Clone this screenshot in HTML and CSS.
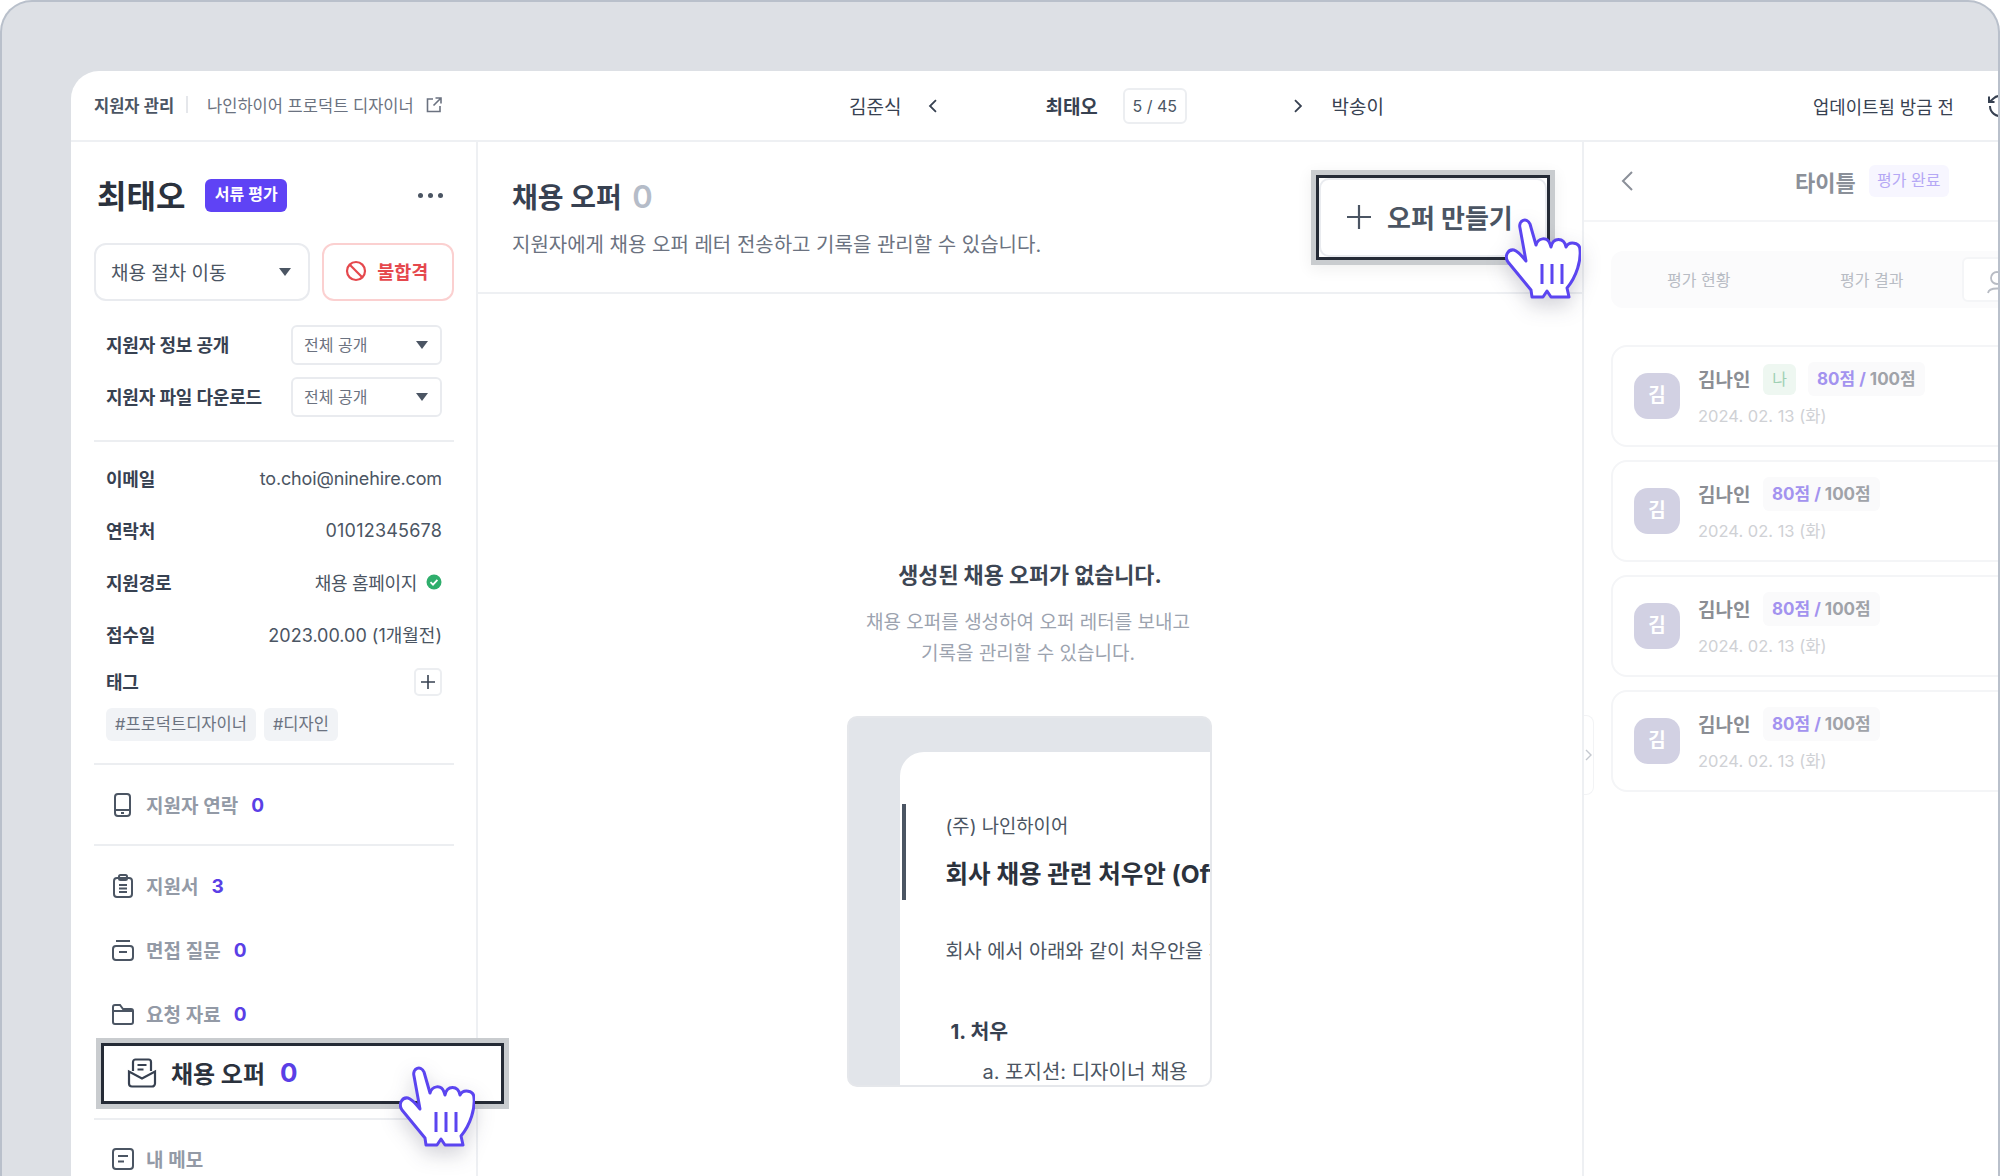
FILE: index.html
```html
<!DOCTYPE html>
<html lang="ko">
<head>
  <meta charset="UTF-8">
  <title>지원자 관리</title>
  <link rel="stylesheet" href="styles.css">
</head>
<body>

  <svg class="defs" width="0" height="0">
    <symbol id="hand" viewBox="0 0 76 81">
      <path d="M26 72 L3 44 C-1 38 3 31 9 32 C13 33 17 38 21 43 L15 10 C13 2 22 -1 25 6 L31 27 C33 20 42 18 45 26 L46 29 C48 19 59 19 61 29 C64 23 75 24 75 32 C76 42 72 58 62 70 L64 79 L46 79 L42 73 L38 79 L27 79 Z" fill="#fff" stroke="#5b45f0" stroke-width="3" stroke-linejoin="round"/>
      <path d="M37 46V66M47 46V66M57 46V66" fill="none" stroke="#5b45f0" stroke-width="3"/>
    </symbol>
  </svg>

  <div class="frame">
    <div class="window">

      <header class="topbar">
        <div class="crumbs">
          <strong>지원자 관리</strong>
          <span class="crumb-sep"></span>
          <span class="crumb-job">나인하이어 프로덕트 디자이너</span>
          <svg class="crumb-icon" width="18" height="18" viewBox="0 0 18 18" fill="none" stroke="#6b7280" stroke-width="1.6"><path d="M8 3H2.500V15.500H15V10M10.500 2H16V7.500M16 2L8.500 9.500"/></svg>
        </div>
        <div class="pager">
          <span>김준식</span>
          <svg class="pager-prev" width="10" height="16" viewBox="0 0 10 16" fill="none" stroke="#374151" stroke-width="1.8"><path d="M8 2L2 8L8 14"/></svg>
          <strong class="pager-name">최태오</strong>
          <span class="pager-count">5 / 45</span>
          <svg class="pager-next" width="10" height="16" viewBox="0 0 10 16" fill="none" stroke="#374151" stroke-width="1.8"><path d="M2 2L8 8L2 14"/></svg>
          <span class="pager-last">박송이</span>
        </div>
        <div class="updated">
          <span>업데이트됨 방금 전</span>
          <svg width="26" height="26" viewBox="0 0 26 26" fill="none" stroke="#374151" stroke-width="2"><path d="M4 13a10 10 0 1 0 3.500-7.600L3.500 9M3 3.500V9H8.500"/></svg>
        </div>
      </header>

      <div class="columns">

        <aside class="sidebar">
          <div class="name-row">
            <h2 class="name">최태오</h2>
            <span class="stage-badge">서류 평가</span>
            <span class="dots"><i></i><i></i><i></i></span>
          </div>

          <div class="actions">
            <div class="stage-select">채용 절차 이동<span class="caret"></span></div>
            <div class="reject">
              <svg width="22" height="22" viewBox="0 0 22 22" fill="none" stroke="#e5484d" stroke-width="2.2"><circle cx="11" cy="11" r="9"/><path d="M4.800 4.800L17.200 17.200"/></svg>
              불합격
            </div>
          </div>

          <div class="setting">
            <span class="label">지원자 정보 공개</span>
            <div class="mini-select">전체 공개<span class="caret"></span></div>
          </div>
          <div class="setting">
            <span class="label">지원자 파일 다운로드</span>
            <div class="mini-select">전체 공개<span class="caret"></span></div>
          </div>

          <hr class="line line-info">

          <div class="info first"><span class="label">이메일</span><span class="value value-email">to.choi@ninehire.com</span></div>
          <div class="info"><span class="label">연락처</span><span class="value value-phone">01012345678</span></div>
          <div class="info">
            <span class="label">지원경로</span>
            <span class="value value-route">채용 홈페이지
              <svg class="check" width="16" height="16" viewBox="0 0 16 16"><circle cx="8" cy="8" r="7.500" fill="#2fae6c"/><path d="M4.500 8.200L7 10.600L11.400 5.800" fill="none" stroke="#fff" stroke-width="1.8"/></svg>
            </span>
          </div>
          <div class="info"><span class="label">접수일</span><span class="value">2023.00.00 (1개월전)</span></div>

          <div class="tag-head">
            <span class="label">태그</span>
            <span class="tag-add"><svg width="16" height="16" viewBox="0 0 16 16" stroke="#374151" stroke-width="1.6"><path d="M8 1V15M1 8H15"/></svg></span>
          </div>
          <div class="tags">
            <span class="tag">#프로덕트디자이너</span>
            <span class="tag">#디자인</span>
          </div>

          <hr class="line line-tags">

          <div class="menu-item menu-contact">
            <svg width="24" height="24" viewBox="0 0 24 24" fill="none" stroke="#4b5563" stroke-width="2"><rect x="4" y="1" width="15" height="22" rx="3"/><path d="M4 17H19M10 20H13"/></svg>
            <span>지원자 연락</span><b>0</b>
          </div>

          <hr class="line line-menu">

          <div class="menu-item">
            <svg width="24" height="24" viewBox="0 0 24 24" fill="none" stroke="#4b5563" stroke-width="2"><rect x="3" y="4" width="18" height="19" rx="3"/><rect x="8" y="1" width="8" height="5" rx="1.500"/><path d="M8 11H16M8 14.500H16M8 18H16"/></svg>
            <span>지원서</span><b>3</b>
          </div>
          <div class="menu-item">
            <svg width="24" height="24" viewBox="0 0 24 24" fill="none" stroke="#4b5563" stroke-width="2"><path d="M5 3H19"/><rect x="2" y="8" width="20" height="14" rx="3"/><path d="M8 14H16"/></svg>
            <span>면접 질문</span><b>0</b>
          </div>
          <div class="menu-item">
            <svg width="24" height="24" viewBox="0 0 24 24" fill="none" stroke="#4b5563" stroke-width="2"><path d="M2 5a2 2 0 0 1 2-2h5l3 4h8a2 2 0 0 1 2 2v11a2 2 0 0 1-2 2H4a2 2 0 0 1-2-2zM2 9H22"/></svg>
            <span>요청 자료</span><b>0</b>
          </div>

          <div class="menu-focus">
            <svg width="30" height="30" viewBox="0 0 30 30" fill="none" stroke="#374151" stroke-width="2.2"><path d="M6 13V4a2.500 2.500 0 0 1 2.500-2.500H21.500A2.500 2.500 0 0 1 24 4V13M2 13.500V25.500A3 3 0 0 0 5 28.500H25A3 3 0 0 0 28 25.500V13.500L15 20.500ZM10.500 7H19.500M10.500 11.500H16.500"/></svg>
            <span>채용 오퍼</span><b>0</b>
          </div>

          <hr class="line line-focus">

          <div class="menu-item menu-memo">
            <svg width="24" height="24" viewBox="0 0 24 24" fill="none" stroke="#4b5563" stroke-width="2"><rect x="2" y="2" width="20" height="20" rx="3"/><path d="M7 9H17M7 14.500H13"/></svg>
            <span>내 메모</span>
          </div>
        </aside>

        <main class="main">
          <div class="main-head">
            <div>
              <h1 class="main-title">채용 오퍼 <span>0</span></h1>
              <p class="main-sub">지원자에게 채용 오퍼 레터 전송하고 기록을 관리할 수 있습니다.</p>
            </div>
            <div class="offer-focus">
              <div class="offer-btn">
                <svg width="26" height="26" viewBox="0 0 26 26" stroke="#4b5563" stroke-width="2.2"><path d="M13 1V25M1 13H25"/></svg>
                오퍼 만들기
              </div>
            </div>
          </div>

          <div class="empty">
            <h3 class="empty-title">생성된 채용 오퍼가 없습니다.</h3>
            <p class="empty-sub">채용 오퍼를 생성하여 오퍼 레터를 보내고<br>기록을 관리할 수 있습니다.</p>
            <div class="sample">
              <div class="sample-paper">
                <div class="sample-head">
                  <div class="sample-company">(주) 나인하이어</div>
                  <div class="sample-title">회사 채용 관련 처우안 (Offer Letter)</div>
                </div>
                <p class="sample-text">회사 에서 아래와 같이 처우안을 제안합니다.</p>
                <p class="sample-item">1. 처우</p>
                <p class="sample-sub">a. 포지션: 디자이너 채용</p>
              </div>
            </div>
          </div>
        </main>

        <section class="panel">
          <span class="panel-handle"><svg width="7" height="12" viewBox="0 0 7 12" fill="none" stroke="#c4c8cf" stroke-width="1.4"><path d="M1 1L6 6L1 11"/></svg></span>
          <div class="panel-head">
            <svg class="panel-back" width="14" height="22" viewBox="0 0 14 22" fill="none" stroke="#8b9099" stroke-width="2"><path d="M12 2L3 11L12 20"/></svg>
            <strong class="panel-title">타이틀</strong>
            <span class="panel-badge">평가 완료</span>
          </div>
          <div class="panel-tabs">
            <span class="panel-tab">평가 현황</span>
            <span class="panel-tab">평가 결과</span>
            <span class="panel-tab-on"><svg width="22" height="24" viewBox="0 0 22 24" fill="none" stroke="#b8bcc4" stroke-width="1.8"><circle cx="11" cy="8" r="6"/><path d="M2 23C3 17 19 17 20 23"/></svg></span>
          </div>
          <div class="review">
            <span class="avatar">김</span>
            <div>
              <div class="review-top"><span class="review-name">김나인</span><span class="me">나</span><span class="score"><em>80점 /</em> 100점</span></div>
              <div class="review-date">2024. 02. 13 (화)</div>
            </div>
          </div>
          <div class="review">
            <span class="avatar">김</span>
            <div>
              <div class="review-top"><span class="review-name">김나인</span><span class="score"><em>80점 /</em> 100점</span></div>
              <div class="review-date">2024. 02. 13 (화)</div>
            </div>
          </div>
          <div class="review">
            <span class="avatar">김</span>
            <div>
              <div class="review-top"><span class="review-name">김나인</span><span class="score"><em>80점 /</em> 100점</span></div>
              <div class="review-date">2024. 02. 13 (화)</div>
            </div>
          </div>
          <div class="review">
            <span class="avatar">김</span>
            <div>
              <div class="review-top"><span class="review-name">김나인</span><span class="score"><em>80점 /</em> 100점</span></div>
              <div class="review-date">2024. 02. 13 (화)</div>
            </div>
          </div>
        </section>

      </div>
    </div>

    <svg class="hand hand-offer"><use href="#hand"/></svg>
    <svg class="hand hand-menu"><use href="#hand"/></svg>
  </div>

</body>
</html>
```

FILE: styles.css
```css
* {
  box-sizing: border-box;
}

body {
  margin: 0;
  background-color: #fff;
  font-family: Inter, "Noto Sans CJK KR", sans-serif;
  color: #374151;
}

h1, h2, h3, p, hr {
  margin: 0;
}

.defs {
  position: absolute;
}

.frame {
  position: relative;
  width: 2000px;
  height: 1176px;
  padding: 69px 0 0 69px;
  background-color: #dde0e5;
  border: 2px solid #b9c0cb;
  border-bottom: none;
  border-radius: 32px 32px 0 0;
  overflow: hidden;
}

.window {
  height: 1105px;
  background-color: #fff;
  border-top-left-radius: 28px;
  overflow: hidden;
}

/* top bar */

.topbar {
  display: flex;
  align-items: center;
  height: 71px;
  border-bottom: 2px solid #eef0f3;
  white-space: nowrap;
}

.crumbs {
  flex: none;
  display: flex;
  align-items: center;
  width: 778px;
  padding: 0 0 2px 23px;
  font-size: 16.500px;
}

.crumbs strong {
  font-weight: 600;
  color: #4b5563;
}

.crumb-sep {
  width: 2px;
  height: 17px;
  margin: 0 19px 0 12px;
  background-color: #e5e7eb;
}

.crumb-job {
  color: #6b7280;
}

.crumb-icon {
  margin-left: 11px;
}

.pager {
  flex: none;
  display: flex;
  align-items: center;
  width: 535px;
  font-size: 19px;
}

.pager-prev {
  margin-left: 27px;
}

.pager-name {
  margin-left: 107px;
  font-weight: 700;
}

.pager-count {
  width: 64px;
  height: 36px;
  margin-left: 25px;
  border: 2px solid #eceef1;
  border-radius: 6px;
  font-size: 16px;
  line-height: 32px;
  text-align: center;
  color: #4b5563;
}

.pager-next {
  margin-left: 106px;
}

.pager-last {
  margin-left: 29px;
}

.updated {
  flex: none;
  display: flex;
  align-items: center;
  gap: 32px;
  margin-left: 429px;
  font-size: 17.800px;
}

.columns {
  display: flex;
  height: 1034px;
}

/* sidebar */

.sidebar {
  flex: none;
  width: 407px;
  padding: 34px 22px 0 23px;
  border-right: 2px solid #eef0f3;
}

.name-row {
  display: flex;
  align-items: center;
  height: 38px;
  padding: 0 11px 0 3px;
}

.name {
  padding-bottom: 2px;
  font-size: 32px;
  font-weight: 700;
  color: #2b323d;
}

.stage-badge {
  margin-left: 20px;
  width: 82px;
  height: 33px;
  border-radius: 6px;
  background-color: #5f43f5;
  color: #fff;
  font-size: 16px;
  font-weight: 600;
  line-height: 31px;
  text-align: center;
}

.dots {
  display: flex;
  gap: 5px;
  margin-left: auto;
}

.dots i {
  width: 5px;
  height: 5px;
  border-radius: 50%;
  background-color: #4b5563;
}

.actions {
  display: flex;
  gap: 12px;
  margin-top: 29px;
}

.stage-select {
  display: flex;
  align-items: center;
  justify-content: space-between;
  width: 217px;
  height: 58px;
  padding: 0 17px 2px 15px;
  border: 2px solid #e9ebef;
  border-radius: 12px;
  font-size: 19px;
  color: #4b5563;
}

.caret {
  width: 0;
  height: 0;
  margin-top: 2px;
  border-left: 6px solid transparent;
  border-right: 6px solid transparent;
  border-top: 8px solid #4b5563;
}

.reject {
  display: flex;
  align-items: center;
  justify-content: center;
  gap: 10px;
  width: 132px;
  height: 58px;
  padding: 0 3px 2px 0;
  border: 2px solid #fbd0d0;
  border-radius: 12px;
  font-size: 18.500px;
  font-weight: 700;
  color: #e5484d;
}

.setting {
  display: flex;
  align-items: center;
  justify-content: space-between;
  margin-top: 12px;
  padding: 0 12px;
}

.actions + .setting {
  margin-top: 24px;
}

.label {
  padding-bottom: 2px;
  font-size: 18px;
  font-weight: 600;
  letter-spacing: -0.2px;
  color: #374151;
}

.mini-select {
  display: flex;
  align-items: center;
  justify-content: space-between;
  width: 151px;
  height: 40px;
  padding: 0 12px 2px 11px;
  border: 2px solid #e9ebef;
  border-radius: 6px;
  font-size: 16px;
  color: #6b7280;
}

.line {
  height: 2px;
  border: none;
  background-color: #eceef1;
}

.line-info {
  margin-top: 23px;
}

.info {
  display: flex;
  align-items: center;
  justify-content: space-between;
  height: 52px;
  padding: 0 12px;
}

.info.first {
  margin-top: 11px;
}

.value {
  display: flex;
  align-items: center;
  padding-bottom: 2px;
  font-size: 18px;
  color: #4b5563;
}

.value-email {
  letter-spacing: -0.15px;
}

.value-phone {
  letter-spacing: 0.2px;
}

.value-route {
  letter-spacing: -0.3px;
}

.check {
  margin-left: 9px;
}

.tag-head {
  display: flex;
  align-items: center;
  justify-content: space-between;
  margin-top: 7px;
  padding: 0 12px;
}

.tag-add {
  display: flex;
  align-items: center;
  justify-content: center;
  width: 28px;
  height: 28px;
  border: 2px solid #eceef1;
  border-radius: 5px;
}

.tags {
  display: flex;
  gap: 8px;
  margin-top: 12px;
  padding-left: 12px;
}

.tag {
  height: 33px;
  padding: 0 9px;
  border-radius: 6px;
  background-color: #f1f3f6;
  font-size: 16.500px;
  line-height: 32px;
  color: #6b7280;
}

.line-tags {
  margin-top: 22px;
}

.menu-item {
  display: flex;
  align-items: center;
  height: 40px;
  margin-top: 24px;
  padding-left: 17px;
  font-size: 19px;
  font-weight: 600;
  color: #939aa6;
}

.menu-item span {
  margin-left: 11px;
  padding-bottom: 1px;
}

.menu-item b,
.menu-focus b {
  margin-left: 13px;
  font-weight: 700;
  color: #5a3fe6;
}

.menu-contact {
  margin-top: 20px;
}

.line-menu {
  margin-top: 19px;
}

.line-menu + .menu-item {
  margin-top: 20px;
}

.menu-focus {
  position: relative;
  z-index: 1;
  display: flex;
  align-items: center;
  width: 403px;
  height: 61px;
  margin: 9px 0 0 7px;
  padding: 0 0 2px 23px;
  border: 3px solid #252b36;
  background-color: #fff;
  box-shadow: 0 0 0 5px #c9cccf;
  font-size: 24px;
  font-weight: 700;
  color: #2b323d;
}

.menu-focus span {
  margin-left: 14px;
}

.menu-focus b {
  margin-left: 15px;
  font-size: 26px;
}

.line-focus {
  margin-top: 14px;
}

.menu-memo {
  margin-top: 19px;
}

/* main column */

.main {
  flex: none;
  width: 1104px;
}

.main-head {
  display: flex;
  justify-content: space-between;
  height: 152px;
  padding: 33px 32px 0 34px;
  border-bottom: 2px solid #eef0f3;
}

.main-title {
  margin-top: 3px;
  font-size: 28px;
  font-weight: 700;
  line-height: 38px;
  color: #374151;
}

.main-title span {
  margin-left: 4px;
  font-size: 31px;
  font-weight: 600;
  color: #b5bcc8;
}

.main-sub {
  margin-top: 12px;
  font-size: 20px;
  color: #6b7280;
}

.offer-focus {
  width: 234px;
  height: 85px;
  border: 3px solid #252b36;
  box-shadow: 0 0 0 5px #c9cccf, 0 4px 14px 6px rgba(0, 0, 0, 0.06);
  background-color: #fff;
}

.offer-btn {
  display: flex;
  align-items: center;
  gap: 15px;
  height: 100%;
  padding: 0 0 2px 25px;
  border: 2px solid #e9ebef;
  border-radius: 10px;
  font-size: 26px;
  font-weight: 700;
  color: #4b5563;
  white-space: nowrap;
}

.empty {
  display: flex;
  flex-direction: column;
  align-items: center;
  padding-top: 266px;
}

.empty-title {
  font-size: 21.800px;
  font-weight: 700;
  line-height: 30px;
  color: #3d4653;
}

.empty-sub {
  margin: 17px 4px 0 0;
  font-size: 19px;
  line-height: 31px;
  text-align: center;
  color: #9ca3af;
}

.sample {
  width: 365px;
  height: 371px;
  margin: 47px 2px 0 0;
  padding: 34px 0 0 51px;
  border: 2px solid #e5e7eb;
  border-radius: 10px;
  background-color: #e2e5ea;
  overflow: hidden;
}

.sample-paper {
  height: 100%;
  padding-top: 52px;
  border-top-left-radius: 24px;
  background-color: #fff;
  white-space: nowrap;
  overflow: hidden;
}

.sample-head {
  margin-left: 2px;
  height: 96px;
  padding: 10px 0 0 40px;
  border-left: 4px solid #4b5563;
}

.sample-company {
  font-size: 18.800px;
  line-height: 26px;
  color: #4b5563;
}

.sample-title {
  margin-top: 19px;
  font-size: 24.500px;
  font-weight: 700;
  line-height: 30px;
  color: #2b323d;
}

.sample-text {
  margin: 38px 0 0 46px;
  font-size: 19.700px;
  line-height: 26px;
  color: #4b5563;
}

.sample-item {
  margin: 55px 0 0 51px;
  font-size: 20.500px;
  font-weight: 700;
  line-height: 26px;
  color: #374151;
}

.sample-sub {
  margin: 14px 0 0 83px;
  font-size: 20px;
  line-height: 26px;
  color: #4b5563;
}

/* right panel, faded behind the main column */

.panel {
  position: relative;
  flex: none;
  width: 416px;
  border-left: 2px solid #eef0f3;
  white-space: nowrap;
}

.panel-handle {
  position: absolute;
  left: 0;
  top: 573px;
  display: flex;
  align-items: center;
  width: 10px;
  height: 80px;
  padding-left: 1px;
  border: 1px solid #f2f3f5;
  border-left: none;
  border-radius: 0 8px 8px 0;
}

.panel-head {
  display: flex;
  align-items: center;
  height: 80px;
  border-bottom: 2px solid #f4f5f7;
}

.panel-back {
  margin-left: 36px;
}

.panel-title {
  margin-left: 161px;
  font-size: 22px;
  font-weight: 700;
  color: #8b9099;
}

.panel-badge {
  width: 80px;
  height: 32px;
  margin-left: 13px;
  border-radius: 6px;
  background-color: #f7f6ff;
  font-size: 16px;
  line-height: 31px;
  text-align: center;
  color: #b5a8f5;
}

.panel-tabs {
  display: flex;
  align-items: center;
  width: 460px;
  height: 57px;
  margin: 29px 0 37px 27px;
  border-radius: 12px;
  background-color: #fbfbfc;
  font-size: 16px;
  color: #b8bcc4;
}

.panel-tab {
  width: 64px;
  padding-bottom: 2px;
  margin-left: 56px;
}

.panel-tab + .panel-tab {
  margin-left: 109px;
}

.panel-tab-on {
  display: block;
  width: 100px;
  height: 45px;
  margin-left: 58px;
  padding: 11px 0 0 22px;
  border: 2px solid #f4f5f7;
  border-radius: 6px;
  background-color: #fff;
}

.review {
  display: flex;
  align-items: center;
  width: 460px;
  height: 102px;
  margin: 0 0 13px 27px;
  padding-left: 21px;
  border: 2px solid #f4f5f7;
  border-radius: 16px;
}

.avatar {
  flex: none;
  width: 46px;
  height: 46px;
  margin-right: 18px;
  border-radius: 14px;
  background-color: #d2d1e3;
  font-size: 19px;
  font-weight: 700;
  line-height: 45px;
  text-align: center;
  color: #fff;
}

.review-top {
  display: flex;
  align-items: center;
  height: 34px;
  margin-top: -2px;
}

.review-name {
  width: 65px;
  padding-bottom: 2px;
  font-size: 19px;
  font-weight: 600;
  color: #8b8e94;
}

.me {
  width: 33px;
  height: 31px;
  margin-right: 12px;
  border-radius: 6px;
  background-color: #eef7f1;
  font-size: 16px;
  line-height: 31px;
  text-align: center;
  color: #9fd0b4;
}

.score {
  height: 34px;
  padding: 0 9px;
  border-radius: 6px;
  background-color: #fafafb;
  font-size: 17px;
  font-weight: 700;
  line-height: 34px;
  color: #a0a3a9;
}

.score em {
  font-style: normal;
  color: #a393ef;
}

.review-date {
  margin-top: 8px;
  font-size: 16.500px;
  line-height: 24px;
  color: #cfd1d5;
}

/* pointers over the highlighted controls */

.hand {
  position: absolute;
  width: 76px;
  height: 81px;
  z-index: 2;
  overflow: visible;
  filter: drop-shadow(0 8px 10px rgba(30, 30, 60, 0.2));
}

.hand-offer {
  left: 1503px;
  top: 216px;
}

.hand-menu {
  left: 397px;
  top: 1064px;
}
```
